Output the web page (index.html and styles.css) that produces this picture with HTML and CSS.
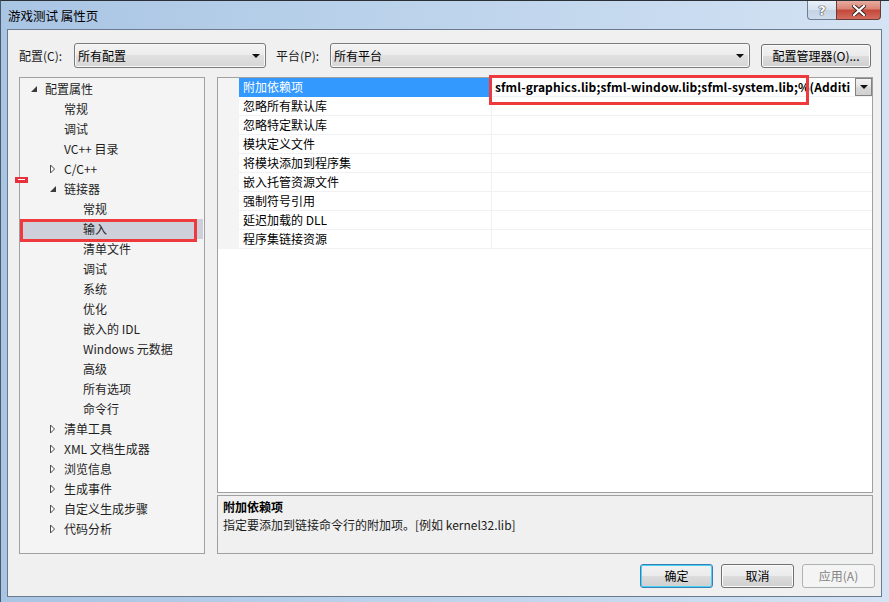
FILE: index.html
```html
<!DOCTYPE html>
<html lang="zh-CN">
<head>
<meta charset="utf-8">
<title>游戏测试 属性页</title>
<link rel="stylesheet" href="styles.css">
</head>
<body>
<div class="window">
  <div class="titlebar">
    <span class="title">游戏测试 属性页</span>
    <div class="caption-btns">
      <div class="cb help">?</div>
      <div class="cb close">
        <svg width="14" height="11" viewBox="0 0 14 11"><path d="M2 1 L12 10 M12 1 L2 10" stroke="#3a2020" stroke-width="4" stroke-linecap="square"/><path d="M2 1 L12 10 M12 1 L2 10" stroke="#ffffff" stroke-width="2.2" stroke-linecap="square"/></svg>
      </div>
    </div>
  </div>
  <div class="client">
    <div class="toolbar">
      <span class="lbl lbl-cfg">配置(C):</span>
      <div class="combo combo-cfg"><span>所有配置</span><i class="tri"></i></div>
      <span class="lbl lbl-plat">平台(P):</span>
      <div class="combo combo-plat"><span>所有平台</span><i class="tri"></i></div>
      <div class="btn btn-mgr">配置管理器(O)...</div>
    </div>
    <div class="main">
      <div class="tree">
        <div class="mark"></div>
        <div class="row l0"><span class="arr"><svg width="8" height="8" viewBox="0 0 8 8"><path d="M7 1 L7 7 L1 7 Z" fill="#3a3a3a"/></svg></span>配置属性</div>
        <div class="row l1"><span class="arr"></span>常规</div>
        <div class="row l1"><span class="arr"></span>调试</div>
        <div class="row l1"><span class="arr"></span>VC++ 目录</div>
        <div class="row l1"><span class="arr"><svg width="8" height="10" viewBox="0 0 8 10"><path d="M1.5 1 L5.5 5 L1.5 9 Z" fill="#fff" stroke="#4a4a4a"/></svg></span>C/C++</div>
        <div class="row l1"><span class="arr"><svg width="8" height="8" viewBox="0 0 8 8"><path d="M7 1 L7 7 L1 7 Z" fill="#3a3a3a"/></svg></span>链接器</div>
        <div class="row l2"><span class="arr"></span>常规</div>
        <div class="row l2 sel"><span class="arr"></span>输入<div class="redbox tree-box"></div></div>
        <div class="row l2"><span class="arr"></span>清单文件</div>
        <div class="row l2"><span class="arr"></span>调试</div>
        <div class="row l2"><span class="arr"></span>系统</div>
        <div class="row l2"><span class="arr"></span>优化</div>
        <div class="row l2"><span class="arr"></span>嵌入的 IDL</div>
        <div class="row l2"><span class="arr"></span>Windows 元数据</div>
        <div class="row l2"><span class="arr"></span>高级</div>
        <div class="row l2"><span class="arr"></span>所有选项</div>
        <div class="row l2"><span class="arr"></span>命令行</div>
        <div class="row l1"><span class="arr"><svg width="8" height="10" viewBox="0 0 8 10"><path d="M1.5 1 L5.5 5 L1.5 9 Z" fill="#fff" stroke="#4a4a4a"/></svg></span>清单工具</div>
        <div class="row l1"><span class="arr"><svg width="8" height="10" viewBox="0 0 8 10"><path d="M1.5 1 L5.5 5 L1.5 9 Z" fill="#fff" stroke="#4a4a4a"/></svg></span>XML 文档生成器</div>
        <div class="row l1"><span class="arr"><svg width="8" height="10" viewBox="0 0 8 10"><path d="M1.5 1 L5.5 5 L1.5 9 Z" fill="#fff" stroke="#4a4a4a"/></svg></span>浏览信息</div>
        <div class="row l1"><span class="arr"><svg width="8" height="10" viewBox="0 0 8 10"><path d="M1.5 1 L5.5 5 L1.5 9 Z" fill="#fff" stroke="#4a4a4a"/></svg></span>生成事件</div>
        <div class="row l1"><span class="arr"><svg width="8" height="10" viewBox="0 0 8 10"><path d="M1.5 1 L5.5 5 L1.5 9 Z" fill="#fff" stroke="#4a4a4a"/></svg></span>自定义生成步骤</div>
        <div class="row l1"><span class="arr"><svg width="8" height="10" viewBox="0 0 8 10"><path d="M1.5 1 L5.5 5 L1.5 9 Z" fill="#fff" stroke="#4a4a4a"/></svg></span>代码分析</div>
      </div>
      <div class="right">
        <div class="grid">
          <div class="redbox grid-box"></div>
          <div class="prow active">
            <div class="gut"></div><div class="name">附加依赖项</div>
            <div class="val"><span class="vtext">sfml-graphics.lib;sfml-window.lib;sfml-system.lib;%(Additi</span><div class="ddbtn"><i class="tri"></i></div></div>
          </div>
          <div class="prow"><div class="gut"></div><div class="name">忽略所有默认库</div><div class="val"></div></div>
          <div class="prow"><div class="gut"></div><div class="name">忽略特定默认库</div><div class="val"></div></div>
          <div class="prow"><div class="gut"></div><div class="name">模块定义文件</div><div class="val"></div></div>
          <div class="prow"><div class="gut"></div><div class="name">将模块添加到程序集</div><div class="val"></div></div>
          <div class="prow"><div class="gut"></div><div class="name">嵌入托管资源文件</div><div class="val"></div></div>
          <div class="prow"><div class="gut"></div><div class="name">强制符号引用</div><div class="val"></div></div>
          <div class="prow"><div class="gut"></div><div class="name">延迟加载的 DLL</div><div class="val"></div></div>
          <div class="prow"><div class="gut"></div><div class="name">程序集链接资源</div><div class="val"></div></div>
        </div>
        <div class="desc">
          <div class="desc-title">附加依赖项</div>
          <div class="desc-text">指定要添加到链接命令行的附加项。[例如 kernel32.lib]</div>
        </div>
      </div>
    </div>
    <div class="buttons">
      <div class="btn btn-ok">确定</div>
      <div class="btn">取消</div>
      <div class="btn disabled">应用(A)</div>
    </div>
  </div>
</div>
</body>
</html>
```
FILE: styles.css
```css
* { box-sizing: border-box; }
html, body { margin: 0; padding: 0; }
body {
  width: 889px; height: 602px; overflow: hidden;
  font-family: "Noto Sans CJK SC", "Noto Sans", sans-serif;
  font-size: 12px; color: #000;
  background: #c1d6ec;
}
.window {
  width: 889px; height: 602px;
  display: flex; flex-direction: column;
  border-top: 1px solid #2b2f36;
  border-left: 1px solid #4a5a6e;
  background: linear-gradient(to right, #a9c5e4 0%, #b9d1ea 40%, #cadcf0 80%, #d5e4f4 100%);
}
.titlebar {
  height: 28px; flex: none;
  display: flex; align-items: center;
  padding: 0 8px 0 7px;
}
.title { font-size: 12.5px; line-height: 16px; color: #000; margin-top: 1px; }
.caption-btns { margin-left: auto; align-self: flex-start; display: flex; }
.cb { height: 19px; display: flex; align-items: center; justify-content: center; }
.help {
  width: 29px;
  border: 1px solid #6e7f95; border-top: none; border-right: none;
  border-radius: 0 0 0 4px;
  background: linear-gradient(#e9f0f7, #d5e1ee 50%, #c3d3e5 50%, #cfdceb);
  font-family: "DejaVu Sans", sans-serif; font-weight: bold; font-size: 13px; color: #fff;
  text-shadow: 0 0 1px #333, 0 0 1px #333, 0 0 1px #333;
}
.close {
  width: 45px;
  border: 1px solid #6b3b38; border-top: none;
  border-radius: 0 0 4px 0;
  background: linear-gradient(#e7ad9f, #d98374 45%, #c4463a 50%, #d26d5f 100%);
}
.client {
  width: 875px; height: 568px; flex: none;
  margin-left: 6px;
  border: 1px solid #6a7b90;
  background: #f0f0f0;
  display: flex; flex-direction: column;
}
.toolbar {
  margin-top: 13px; height: 25px;
  padding-left: 11px;
  display: flex; align-items: center;
}
.lbl { line-height: 16px; color: #1a1a1a; }
.lbl-cfg { width: 55px; }
.lbl-plat { width: 54px; margin-left: 10px; }
.combo {
  height: 25px;
  border: 1px solid #7a7a7a; border-radius: 3px;
  background: linear-gradient(#f3f3f3, #ececec 50%, #e0e0e0 50%, #d6d6d6);
  display: flex; align-items: center;
  padding: 0 5px 0 3px;
  box-shadow: inset 0 0 0 1px #f8f8f8;
}
.combo span { flex: 1; line-height: 16px; }
.combo-cfg { width: 192px; }
.combo-plat { width: 420px; }
.tri {
  display: block; width: 0; height: 0;
  border-left: 4px solid transparent; border-right: 4px solid transparent;
  border-top: 4px solid #111;
}
.btn {
  height: 24px; width: 73px;
  border: 1px solid #707070; border-radius: 3px;
  background: linear-gradient(#f2f2f2, #ebebeb 50%, #dddddd 50%, #cfcfcf);
  box-shadow: inset 0 0 0 1px #fbfbfb;
  display: flex; align-items: center; justify-content: center;
  line-height: 16px;
}
.btn-mgr { width: 110px; margin-left: 11px; margin-top: 1px; }
.btn-ok { border-color: #3c7fb1; box-shadow: inset 0 0 0 1px #48d2fa; }
.btn.disabled { border-color: #adb2b5; background: #f4f4f4; color: #838383; box-shadow: none; }
.main {
  margin-top: 9px; height: 477px;
  padding-left: 11px;
  display: flex; gap: 12px;
}
.tree {
  position: relative;
  width: 186px; height: 477px;
  border: 1px solid #a0a0a0;
  background: #f4f4f4;
  padding-top: 1px;
}
.mark {
  position: absolute; left: -5px; top: 99px;
  width: 13px; height: 6px; background: #e8323a;
}
.mark::after {
  content: ""; position: absolute; left: 3px; top: 2px; width: 7px; height: 1px; background: #fff;
}
.row {
  position: relative;
  height: 20px; line-height: 20px;
  display: flex; align-items: center;
  color: #1e1e1e; white-space: nowrap;
}
.row.l0 { padding-left: 9px; }
.row.l1 { padding-left: 28px; }
.row.l2 { padding-left: 47px; }
.arr { width: 16px; height: 20px; flex: none; display: flex; align-items: center; padding-left: 1px; }
.row.sel { background: #cdcfdb; margin-right: 1px; }
.redbox { position: absolute; border: 3px solid #ee3a3c; pointer-events: none; }
.tree-box { left: 0; top: 0; width: 177px; height: 23px; }
.right { width: 656px; display: flex; flex-direction: column; gap: 2px; }
.grid {
  position: relative;
  height: 416px;
  border: 1px solid #a0a0a0;
  background: #fff;
}
.grid-box { left: 271px; top: -3px; width: 320px; height: 30px; z-index: 2; }
.prow { height: 19px; display: flex; }
.gut { width: 21px; flex: none; background: #f4f4f4; }
.name {
  width: 252px; flex: none;
  padding-left: 4px;
  line-height: 18px;
  border-bottom: 1px solid #eff1f4;
  white-space: nowrap;
}
.val {
  flex: 1; min-width: 0;
  border-left: 1px solid #eff1f4;
  border-bottom: 1px solid #eff1f4;
  display: flex; align-items: flex-start;
}
.active .name { background: #3399ff; color: #fff; border-bottom-color: #3399ff; }
.vtext {
  flex: 1; min-width: 0; overflow: hidden; white-space: nowrap;
  padding-left: 3px;
  font-weight: bold; line-height: 18px;
  letter-spacing: 0.1px;
}
.ddbtn {
  width: 17px; height: 18px; flex: none;
  border: 1px solid #828282;
  background: linear-gradient(#f3f3f3, #e3e3e3 50%, #d8d8d8 50%, #d0d0d0);
  display: flex; align-items: center; justify-content: center;
}
.desc {
  height: 59px;
  border: 1px solid #a0a0a0;
  background: #f0f0f0;
  padding: 2px 0 0 5px;
}
.desc-title { font-weight: bold; line-height: 18px; }
.desc-text { line-height: 18px; color: #1a1a1a; }
.buttons {
  margin-top: 10px;
  display: flex; justify-content: flex-end; gap: 8px;
  padding-right: 6px;
}
```
